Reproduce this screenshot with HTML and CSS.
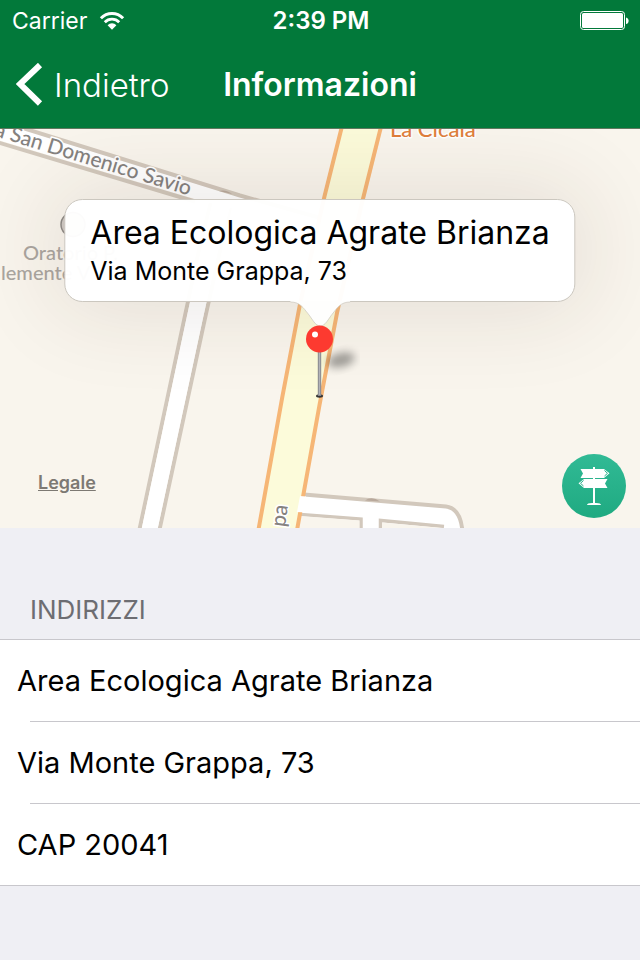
FILE: index.html
```html
<!doctype html>
<html lang="it">
<head>
<meta charset="utf-8">
<meta name="viewport" content="width=device-width,initial-scale=1">
<title>Informazioni</title>
<link rel="stylesheet" href="styles.css">
</head>
<body>
<header>
  <div class="status">
    <div class="carrier">
      <span>Carrier</span>
      <svg width="26" height="20" viewBox="0 0 26 20" aria-hidden="true">
        <path d="M1.900 7.200a15.500 15.500 0 0 1 22.200 0" fill="none" stroke="#fff" stroke-width="3"/>
        <path d="M5.800 11.200a10 10 0 0 1 14.400 0" fill="none" stroke="#fff" stroke-width="2.800"/>
        <path d="M8.600 14.200a6.200 6.200 0 0 1 8.800 0L13 18.800z" fill="#fff"/>
      </svg>
    </div>
    <time>2:39 PM</time>
    <svg class="battery" width="50" height="20" viewBox="0 0 50 20" aria-label="Batteria">
      <rect x=".5" y=".5" width="44" height="18" rx="3" fill="none" stroke="#fff" stroke-width="1"/>
      <rect x="2" y="2" width="41" height="15" rx="1.500" fill="#fff"/>
      <path d="M46 6.500c3.500.6 3.500 6 0 6.600z" fill="#fff"/>
    </svg>
  </div>
  <nav>
    <button class="back">
      <svg width="27" height="44" viewBox="0 0 27 44" aria-hidden="true">
        <path d="M24 2 4 21l20 19.500" fill="none" stroke="#fff" stroke-width="6"/>
      </svg>
      <span>Indietro</span>
    </button>
    <h1>Informazioni</h1>
  </nav>
</header>

<main>
<section class="map">
  <svg class="tiles" viewBox="0 0 640 400" preserveAspectRatio="xMidYMid slice" role="img" aria-label="Mappa">
    <rect width="640" height="400" fill="#f9f5ed"/>
    <!-- strade secondarie -->
    <g fill="none" stroke="#d2c8bc" stroke-width="4">
      <path d="M138 408 184 192 199 122 212 70"/>
      <path d="M158 408 204.500 192 220 122 232 70"/>
    </g>
    <path d="M140 408 186 192 201 122 216 60 234 64 218 122 202.500 192 156 408z" fill="#fff"/>
    <path d="M-40 0 0 12 200 72 340 106 340 94 240 67 22 0z" fill="#fff"/>
    <path d="M18-2 240 67 340 95M-5 13 195 73" fill="none" stroke="#d2c8bc" stroke-width="4"/>
    <path d="M219 62.500q7-2 13 3z" fill="#b9a99c"/>
    <path d="M298 366 446 378Q461 380 462 404H298z" fill="#fff"/>
    <path d="M298 365.500 446 378Q461 380 462.500 404" fill="none" stroke="#d2c8bc" stroke-width="4"/>
    <path d="M294 385.500 361 390.500V404M380.500 404V392L444 398" fill="none" stroke="#d2c8bc" stroke-width="3.500"/>
    <path d="M294 387 359.500 392V404H294zM382 394 443 399.500V404H382z" fill="#f9f5ed"/>
    <path d="M365 372q7-5 15 1z" fill="#b9a99c"/>
    <!-- via Monte Grappa -->
    <g fill="none" stroke="#f6b676" stroke-width="42">
      <path d="M366-20 361 0 343 72 318.500 180 301 272 278 400 274 422"/>
      <path d="M366-20 361 0 343 72 318.500 180 301 272 278 400 274 422" stroke="#fcfbda" stroke-width="34"/>
    </g>
    <path d="M300 367.500 306 368V384L297 383.500z" fill="#fff"/>
    <circle cx="73" cy="96" r="12" fill="#d0cbc5" stroke="#8f8b86" stroke-width="1.500"/>
    <g class="labels">
      <text class="street" transform="translate(189 67) rotate(17)" text-anchor="end">a San Domenico Savio</text>
      <text class="street" transform="translate(288 377) rotate(-82)" text-anchor="end">pa</text>
      <text class="food" x="390" y="8">La Cicala</text>
      <text class="place" x="23" y="131">Oratorio P.</text>
      <text class="place" x="1" y="151">lemente V</text>
    </g>
  </svg>
  <div class="glow"></div>
  <div class="callout">
    <h2>Area Ecologica Agrate Brianza</h2>
    <p>Via Monte Grappa, 73</p>
    <svg class="tail" width="60" height="27" viewBox="0 0 60 27" aria-hidden="true">
      <path d="M0 0V1C10 1 13 7 18 13C22 18 25 25 30 25S38 18 42 13C47 7 50 1 60 1V0z" fill="#fefefd"/>
      <path d="M0 1C10 1 13 7 18 13C22 18 25 25 30 25S38 18 42 13C47 7 50 1 60 1" fill="none" stroke="#cbc7bf" stroke-width=".7"/>
    </svg>
  </div>
  <svg class="pin" width="80" height="80" viewBox="0 0 80 80" aria-hidden="true">
    <defs><filter id="soft" x="-50%" y="-50%" width="200%" height="200%"><feGaussianBlur stdDeviation="4"/></filter></defs>
    <ellipse cx="61" cy="38" rx="14" ry="7" fill="#000" opacity=".36" transform="rotate(-14 61 38)" filter="url(#soft)"/>
    <ellipse cx="39.500" cy="74" rx="3.500" ry="1.700" fill="#333"/>
    <path d="M39.500 28v46" stroke="#85868b" stroke-width="3.400"/>
    <path d="M39.500 30v43" stroke="#b2b3b8" stroke-width="1.500"/>
    <circle cx="39.500" cy="17" r="13.500" fill="#fd3a30"/>
    <circle cx="35" cy="12.500" r="3" fill="#fff"/>
  </svg>
  <a class="legal" href="#legale">Legale</a>
  <button class="directions" aria-label="Indicazioni">
    <svg width="32" height="40" viewBox="0 0 32 40" fill="#fff" aria-hidden="true">
      <path d="M15 1h2v36h-2zM9 39q0-2 5-2h4q5 0 5 2z"/>
      <path d="M2.500 3H26l5.500 4.300L26 12H2.500l2.500-4.500zM29.500 13H6l-5.500 4.300L6 22h23.500L27 17.500z"/>
      <path d="M26.500 4.500 29.500 7.300 26.500 10M5.500 14.500 2.500 17.300 5.500 20" fill="none" stroke="#25b18a" stroke-width="1"/>
    </svg>
  </button>
</section>

<section class="addresses">
  <h3>INDIRIZZI</h3>
  <ul>
    <li>Area Ecologica Agrate Brianza</li>
    <li>Via Monte Grappa, 73</li>
    <li>CAP 20041</li>
  </ul>
</section>
</main>
</body>
</html>
```
FILE: styles.css
```css
:root{--green:#02793a;--bg:#efeff4;--line:#c8c7cc;--muted:#6d6d72}
*{box-sizing:border-box}
body{margin:0;background:var(--bg);color:#000;font-family:Inter,"Liberation Sans",sans-serif}
h1,h2,h3,p,ul{margin:0;padding:0}
button{font:inherit;border:0;background:none;padding:0;cursor:pointer}

header{background:var(--green);color:#fff;border-bottom:1px solid #61785f}
.status{display:grid;grid-template-columns:1fr auto 1fr;align-items:center;height:41px;padding:0 10px 0 12px;font-size:23px}
.carrier{display:flex;align-items:center;gap:12px}
.status time{font-weight:600;font-size:24px}
.battery{justify-self:end}
nav{display:grid;grid-template-columns:1fr auto 1fr;align-items:center;height:87px;padding:0 16px}
.back{display:flex;align-items:center;gap:11px;color:#fff;font-size:33px;line-height:40px;font-weight:300}
h1{font-size:32px;font-weight:600}

.map{position:relative;height:399px;overflow:hidden}
.tiles{display:block;width:100%;height:100%}
.labels text{font-family:Lato,sans-serif;font-weight:500;paint-order:stroke;stroke:#fff;stroke-width:3px;stroke-linejoin:round}
.street{font-size:21px;fill:#85827f}
.labels .food{font-size:22px;fill:#e07f3c}
.labels .place{font-size:20px;fill:#aaa59f;stroke:#f9f5ed}
.glow{position:absolute;top:70px;left:50%;width:510px;height:102px;border-radius:18px;transform:translateX(-50%);box-shadow:0 0 90px 10px rgba(60,40,30,.11)}
.callout{position:absolute;top:70px;left:50%;transform:translateX(-50%);padding:12px 25px 13px;border:1px solid #cbc7bf;border-radius:18px;background:rgba(255,255,255,.97);white-space:nowrap}
.callout h2{font-size:32px;line-height:42px;font-weight:400}
.callout p{font-size:25px;line-height:34px}
.tail{position:absolute;top:100%;left:50%;margin-left:-30px}
.pin{position:absolute;top:193px;left:50%;margin-left:-40px}
.legal{position:absolute;left:38px;bottom:34px;color:#7d7973;font-size:18px;line-height:22px;font-weight:600}
.directions{position:absolute;right:14px;bottom:10px;width:64px;height:64px;border-radius:50%;display:flex;align-items:center;justify-content:center;background:linear-gradient(#31ba95,#1faa81)}

h3{padding:64px 30px 12px;font-size:26px;line-height:35px;font-weight:400;color:var(--muted)}
ul{list-style:none;background:#fff;border-top:1px solid var(--line);border-bottom:1px solid var(--line)}
li{position:relative;padding:20px 17px;font-size:29px;line-height:41px}
li+li{padding-top:21px}
li+li::before{content:"";position:absolute;top:0;left:30px;right:0;border-top:1px solid var(--line)}
```
